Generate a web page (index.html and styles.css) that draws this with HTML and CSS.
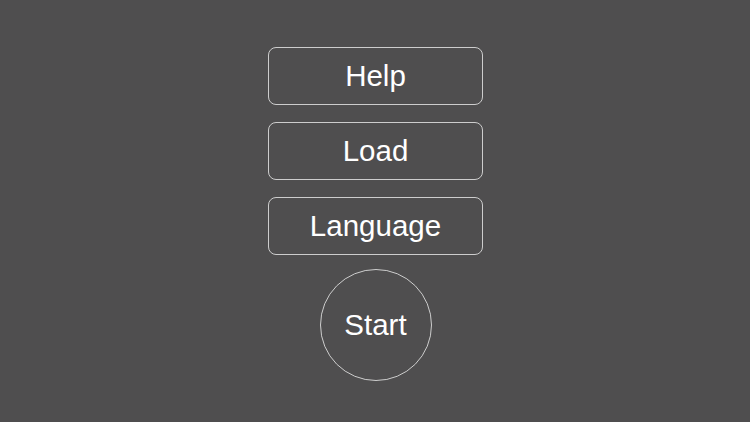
FILE: index.html
```html
<!DOCTYPE html>
<html>
<head>
<meta charset="utf-8">
<link rel="stylesheet" href="styles.css">
</head>
<body>
<main class="menu">
  <button class="btn">Help</button>
  <button class="btn">Load</button>
  <button class="btn">Language</button>
  <button class="start">Start</button>
</main>
</body>
</html>
```
FILE: styles.css
```css
html, body {
  margin: 0;
  padding: 0;
  width: 750px;
  height: 422px;
  background: #4f4e4f;
  overflow: hidden;
}
.menu {
  display: flex;
  flex-direction: column;
  align-items: center;
  padding-top: 47px;
  padding-left: 1px;
}
.btn, .start {
  font-family: "Liberation Sans", Arial, sans-serif;
  font-size: 29.5px;
  color: #ffffff;
  background: transparent;
  border: 1.5px solid #cdcdcd;
  box-sizing: border-box;
  padding: 0;
  margin: 0;
}
.btn {
  width: 215px;
  height: 58px;
  border-radius: 8px;
  margin-bottom: 17px;
}
.start {
  width: 112px;
  height: 112px;
  border-radius: 50%;
  margin-top: -3px;
}
```
